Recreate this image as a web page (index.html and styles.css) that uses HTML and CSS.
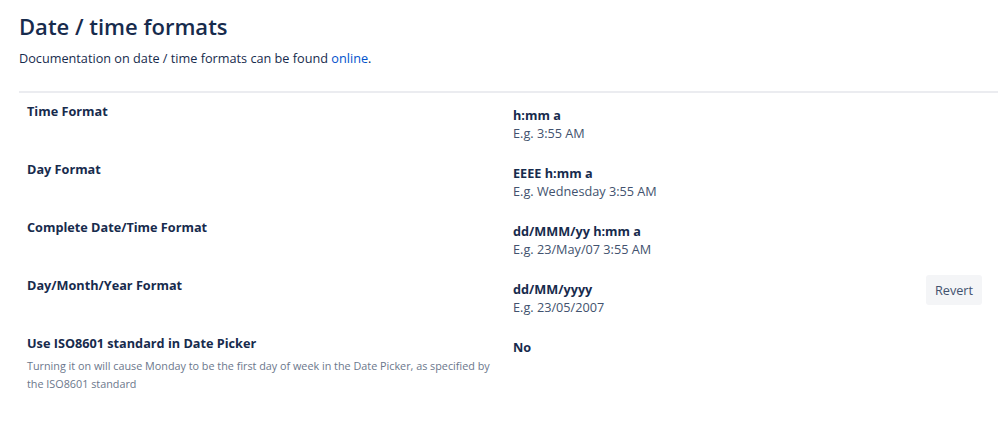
FILE: index.html
```html
<!DOCTYPE html>
<html>
<head>
<meta charset="utf-8">
<link rel="stylesheet" href="styles.css">
</head>
<body>
<div class="page">
  <h1 class="title">Date / time formats</h1>
  <p class="intro">Documentation on date / time formats can be found <a href="#" class="link">online</a>.</p>
  <div class="table">
    <div class="row">
      <div class="label">Time Format</div>
      <div class="value"><div class="fmt">h:mm a</div><div class="ex">E.g. 3:55 AM</div></div>
      <div class="action"></div>
    </div>
    <div class="row">
      <div class="label">Day Format</div>
      <div class="value"><div class="fmt">EEEE h:mm a</div><div class="ex">E.g. Wednesday 3:55 AM</div></div>
      <div class="action"></div>
    </div>
    <div class="row">
      <div class="label">Complete Date/Time Format</div>
      <div class="value"><div class="fmt">dd/MMM/yy h:mm a</div><div class="ex">E.g. 23/May/07 3:55 AM</div></div>
      <div class="action"></div>
    </div>
    <div class="row">
      <div class="label">Day/Month/Year Format</div>
      <div class="value"><div class="fmt">dd/MM/yyyy</div><div class="ex">E.g. 23/05/2007</div></div>
      <div class="action"><button class="btn">Revert</button></div>
    </div>
    <div class="row">
      <div class="label">Use ISO8601 standard in Date Picker
        <div class="desc">Turning it on will cause Monday to be the first day of week in the Date Picker, as specified by the ISO8601 standard</div>
      </div>
      <div class="value"><div class="fmt">No</div></div>
      <div class="action"></div>
    </div>
  </div>
</div>
</body>
</html>
```

FILE: styles.css
```css
html, body {
  margin: 0;
  padding: 0;
  background: #fff;
}
body {
  font-family: "Open Sans", "Noto Sans", sans-serif;
  color: #172b4d;
  font-size: 12.7px;
}
.page {
  padding: 12px 0 0 19px;
}
.title {
  margin: 0;
  font-size: 22px;
  font-weight: 600;
  line-height: 28px;
  color: #172b4d;
}
.intro {
  margin: 8px 0 0;
  font-size: 12.7px;
  line-height: 20px;
  color: #172b4d;
}
.link {
  color: #0052cc;
  text-decoration: none;
}
.table {
  margin-top: 23px;
  border-top: 2px solid #ebecf0;
}
.row {
  display: grid;
  grid-template-columns: 486px 1fr auto;
  padding-top: 8px;
  min-height: 50px;
}
.label {
  padding: 0 0 0 8px;
  font-weight: 700;
  line-height: 20px;
  color: #172b4d;
}
.desc {
  font-weight: 400;
  font-size: 10.8px;
  line-height: 18px;
  color: #6b778c;
  margin-top: 4px;
}
.value {
  padding: 5px 8px 0;
}
.fmt {
  font-weight: 700;
  line-height: 18px;
  color: #172b4d;
}
.ex {
  line-height: 18px;
  color: #42526e;
}
.action {
  display: flex;
  align-items: flex-start;
  padding: 0 16px 0 0;
}
.btn {
  font-family: inherit;
  font-size: 12.7px;
  color: #42526e;
  background: #f4f5f7;
  border: none;
  border-radius: 3px;
  height: 30px;
  width: 56px;
  padding: 0;
}
```
